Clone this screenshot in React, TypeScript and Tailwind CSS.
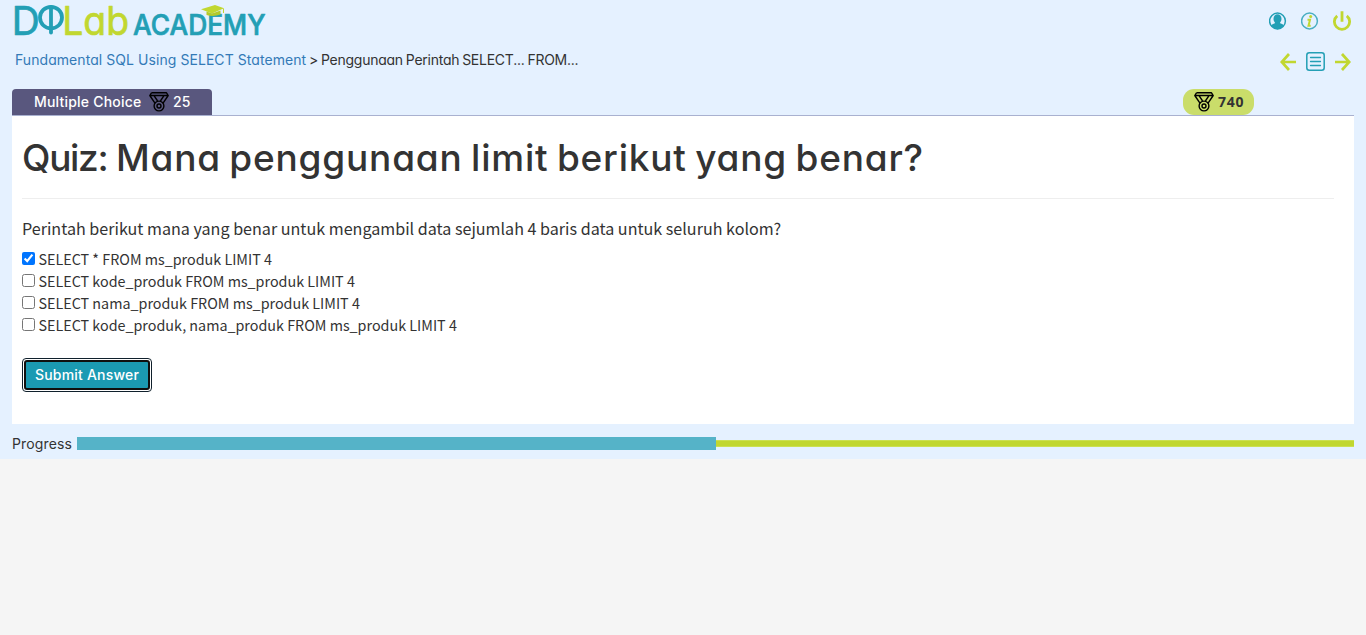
import React from "react";

const geo = "font-['Inter','Liberation_Sans',sans-serif] [font-feature-settings:'cv11']";
const body = "font-['Noto_Sans_CJK_SC','Noto_Sans',sans-serif]";

function Logo() {
  return (
    <svg className="block h-[42px] w-[256px] overflow-visible" viewBox="0 0 256 42" role="img" aria-label="DQLab Academy">
      <g className={geo} strokeLinejoin="round" strokeWidth="0.7">
        <g fill="#239fb5" stroke="#239fb5">
          <text x="-2.2" y="34.5" fontSize="40" fontWeight="400" textLength="28" lengthAdjust="spacingAndGlyphs">D</text>
          <text x="119" y="34.5" fontSize="28.5" fontWeight="500" textLength="132.500" lengthAdjust="spacingAndGlyphs">ACADEMY</text>
        </g>
        <g fill="#c1d730" stroke="#c1d730">
          <text x="48.2" y="34.5" fontSize="40" fontWeight="400" textLength="66.800" lengthAdjust="spacingAndGlyphs">Lab</text>
        </g>
      </g>
      <g fill="none" stroke="#239fb5" strokeWidth="3.8" strokeLinecap="round">
        <ellipse cx="37" cy="17.600" rx="11" ry="10.8" />
        <path d="M37 7v25.5" />
      </g>
      <path d="M187 9.200l14-4.2 9 3.2-12 5.2z" fill="#c1d730" />
      <path d="M192.500 11.5v3.5q7 2 14-.5v-4l-8.5 3z" fill="#b4ca2c" />
      <path d="M209.500 8.500v4.500" stroke="#c1d730" />
    </svg>
  );
}

function Medal() {
  return (
    <svg className="block h-5 w-5 shrink-0" viewBox="0 0 20 20" fill="none" stroke="#000" strokeWidth="1.4" strokeLinejoin="round">
      <path d="M2.500 .8h15l1.700 2.700-5.300 7.800M2.500 .8L.8 3.500l5.300 7.800M.8 3.500h18.400M5 3.700l3.600 5.300M15 3.700l-3.600 5.300" />
      <circle cx="10" cy="14" r="4.9" />
      <circle cx="10" cy="14" r="2" />
    </svg>
  );
}

const options = [
  { label: "SELECT * FROM ms_produk LIMIT 4", checked: true },
  { label: "SELECT kode_produk FROM ms_produk LIMIT 4", checked: false },
  { label: "SELECT nama_produk FROM ms_produk LIMIT 4", checked: false },
  { label: "SELECT kode_produk, nama_produk FROM ms_produk LIMIT 4", checked: false },
];

export default function App() {
  return (
    <div className={`min-h-[635px] bg-[#f5f5f5] text-[#333] ${geo}`}>
      <div className="h-[459px] bg-[#e5f1ff] px-3">
        <header className="flex h-[42px] justify-between pl-[2px]">
          <Logo />
          <div className="flex items-center gap-[14px] pr-[3px]">
            <svg className="h-[18px] w-[18px]" viewBox="0 0 18 18">
              <circle cx="8.500" cy="9" r="7.9" fill="none" stroke="#239fb5" strokeWidth="1.5" />
              <path d="M4.500 6.700a4 4.500 0 0 1 8 0c0 1.800-.7 2.800-1.400 3.700v.8c2 .4 3.400 1.300 3.700 2.700Q12 17.200 8.500 17.200t-6.300-3.300c.3-1.400 2-2.300 3.700-2.700v-.8C5.200 9.500 4.500 8.500 4.500 6.700z" fill="#239fb5" />
            </svg>
            <svg className="h-[18px] w-[18px]" viewBox="0 0 18 18">
              <circle cx="8.500" cy="9" r="7.9" fill="none" stroke="#4aafc2" strokeWidth="1.5" />
              <circle cx="9.700" cy="4.600" r="1.500" fill="#c1d730" />
              <path d="M6.500 7.800h2.500l-1.500 5.900h2.200" fill="none" stroke="#c1d730" strokeWidth="2" />
            </svg>
            <svg className="h-5 w-[18px]" viewBox="0 0 18 20" fill="none" stroke="#c1d730" strokeWidth="2.800">
              <path d="M4.200 4.800a7.600 7.600 0 1 0 9.600 0M9 .3v10.500" />
            </svg>
          </div>
        </header>
        <nav className="flex h-[47px] justify-between pl-[3px]">
          <div className="flex whitespace-pre pt-[8px] text-[14px] leading-5">
            <a className="text-[#337ab7] tracking-[0.06px]">Fundamental SQL Using SELECT Statement</a>
            <span className="tracking-[-0.25px] [word-spacing:-0.8px]"> &gt; Penggunaan Perintah SELECT... FROM...</span>
          </div>
          <div className="flex h-[39px] items-center gap-[10px] pr-[3px]">
            <svg className="h-[18px] w-4" viewBox="0 0 16 18" fill="none" stroke="#c1d730" strokeWidth="2.700">
              <path d="M9 1L1.800 9 9 17M1 9h15" />
            </svg>
            <svg className="h-[19px] w-[19px]" viewBox="0 0 19 19" fill="none" stroke="#239fb5">
              <rect x=".8" y=".8" width="17.400" height="17.400" rx="2.500" strokeWidth="1.500" />
              <path d="M4.500 5.500h10M4.500 9.500h10M4.500 13.500h10" strokeWidth="1.300" strokeLinecap="round" />
            </svg>
            <svg className="h-[18px] w-4" viewBox="0 0 16 18" fill="none" stroke="#c1d730" strokeWidth="2.700">
              <path d="M7 1l7.200 8L7 17M15 9H0" />
            </svg>
          </div>
        </nav>
        <div className="flex h-[27px] items-start justify-between border-b border-[#a9b1d0]">
          <div className="flex h-[26px] w-[200px] items-center rounded-t bg-[#59577e] pl-[22px] text-[14px] font-medium leading-[24px] text-white">
            <span className="w-[115px] whitespace-nowrap tracking-[0.2px]">Multiple Choice</span>
            <Medal />
            <span className="ml-1">25</span>
          </div>
          <div className="mr-[100px] flex h-[26px] w-[71px] items-center rounded-[11px] bg-[#cadd6a] pl-[11px] font-['Noto_Sans',sans-serif] text-[14px] font-bold leading-[24px] tracking-[0.7px]">
            <Medal />
            <span className="ml-1">740</span>
          </div>
        </div>
        <main className="h-[308px] bg-white px-[10px]">
          <h1 className="mr-[10px] h-[83px] whitespace-nowrap border-b border-[#eee] pt-[18px] text-[37px] font-medium leading-[48px] tracking-[0.8px] [word-spacing:-2.2px]">
            <span className="tracking-[-1.3px]">Quiz:</span> Mana penggunaan limit berikut yang benar?
          </h1>
          <div className={body}>
            <p className="mt-[16px] h-[27px] whitespace-nowrap text-[16.120px] leading-[27px]">
              Perintah berikut mana yang benar untuk mengambil data sejumlah 4 baris data untuk seluruh kolom?
            </p>
            <ul className="mt-[6px]">
              {options.map((o) => (
                <li key={o.label}>
                  <label className="flex h-[22px] items-start">
                    <input type="checkbox" defaultChecked={o.checked} className="mt-[4px] h-[13px] w-[13px]" />
                    <span className="ml-[3.500px] whitespace-nowrap text-[14.330px] leading-[22px]">{o.label}</span>
                  </label>
                </li>
              ))}
            </ul>
          </div>
          <button className="mt-[22px] flex h-[34px] w-[130px] items-center justify-center rounded-[4px] border border-[#10202c] bg-white p-px">
            <span className="flex h-full w-full items-center justify-center whitespace-nowrap rounded-[3px] border-2 border-[#101010] bg-[#1b9ab3] pb-[2px] text-[14px] font-medium tracking-[0.2px] text-white">
              Submit Answer
            </span>
          </button>
        </main>
        <footer className="flex h-[35px] items-center pt-[4px] text-[14px]">
          <span className="w-[65px] tracking-[0.15px]">Progress</span>
          <div className="h-[13px] w-[639px] bg-[#55b3c8]" />
          <div className="h-[7px] flex-1 border-y border-[#cbe052] bg-[#c1d730]" />
        </footer>
      </div>
    </div>
  );
}
